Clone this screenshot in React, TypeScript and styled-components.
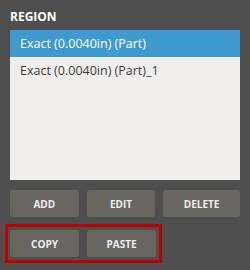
import styled, { createGlobalStyle } from 'styled-components';

const GlobalStyle = createGlobalStyle`
  html, body {
    margin: 0;
    padding: 0;
    background: #4e4e4e;
  }
  body {
    font-family: "Open Sans", "DejaVu Sans", sans-serif;
  }
`;

const Panel = styled.div`
  width: 250px;
  height: 270px;
  box-sizing: border-box;
  padding: 10px 10px 0;
  background: #4e4e4e;
  display: flex;
  flex-direction: column;
`;

const Title = styled.div`
  color: #ffffff;
  font-size: 12px;
  font-weight: 700;
  line-height: 13px;
  height: 20px;
`;

const List = styled.div`
  height: 150px;
  background: #efeeec;
  display: flex;
  flex-direction: column;
`;

const Row = styled.div<{ $selected?: boolean }>`
  height: 27px;
  padding-left: 10px;
  display: flex;
  align-items: center;
  font-size: 12.5px;
  color: ${({ $selected }) => ($selected ? '#ffffff' : '#3c3c3c')};
  background: ${({ $selected }) => ($selected ? '#3f9ad0' : 'transparent')};
`;

const ButtonRow = styled.div`
  display: flex;
  gap: 8px;
  margin-top: 10px;
`;

const Highlight = styled.div`
  display: flex;
  gap: 8px;
  width: 149px;
  margin: 7px 0 0 -5px;
  padding: 3px 0 3px 2px;
  border: 3px solid #c00000;
`;

const Button = styled.button<{ $wide?: boolean }>`
  width: ${({ $wide }) => ($wide ? '77px' : '69px')};
  height: 27px;
  padding: 0;
  border: none;
  border-radius: 3px;
  background: #686661;
  color: #eeeeee;
  font-family: "Open Sans", "DejaVu Sans", sans-serif;
  font-size: 10px;
  font-weight: 700;
  cursor: pointer;
`;

export default function App() {
  return (
    <>
      <GlobalStyle />
      <Panel>
        <Title>REGION</Title>
        <List>
          <Row $selected>Exact (0.0040in) (Part)</Row>
          <Row>Exact (0.0040in) (Part)_1</Row>
        </List>
        <ButtonRow>
          <Button>ADD</Button>
          <Button>EDIT</Button>
          <Button $wide>DELETE</Button>
        </ButtonRow>
        <Highlight>
          <Button>COPY</Button>
          <Button>PASTE</Button>
        </Highlight>
      </Panel>
    </>
  );
}
